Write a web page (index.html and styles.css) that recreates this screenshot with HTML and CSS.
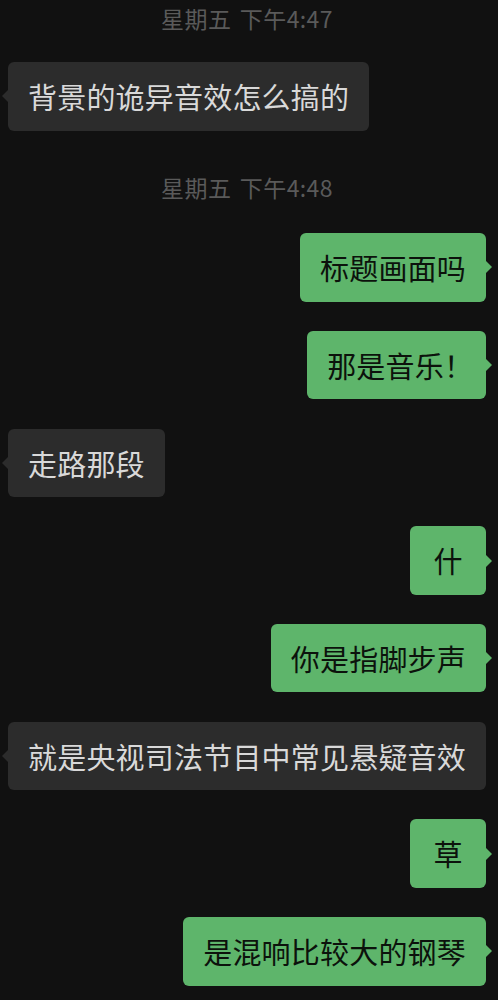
FILE: index.html
```html
<!DOCTYPE html>
<html lang="zh-CN">
<head>
    <meta charset="UTF-8">
    <meta name="viewport" content="width=device-width, initial-scale=1.0">
    <title>聊天</title>
    <link rel="stylesheet" href="styles.css">
</head>
<body>

    <div class="chat">
        <div class="time">星期五 下午4:47</div>
        <div class="msg in"><div class="bubble">背景的诡异音效怎么搞的</div></div>

        <div class="time">星期五 下午4:48</div>
        <div class="msg out"><div class="bubble">标题画面吗</div></div>
        <div class="msg out"><div class="bubble">那是音乐<span class="bang">！</span></div></div>
        <div class="msg in"><div class="bubble">走路那段</div></div>
        <div class="msg out"><div class="bubble">什</div></div>
        <div class="msg out"><div class="bubble">你是指脚步声</div></div>
        <div class="msg in"><div class="bubble">就是央视司法节目中常见悬疑音效</div></div>
        <div class="msg out"><div class="bubble">草</div></div>
        <div class="msg out"><div class="bubble">是混响比较大的钢琴</div></div>
    </div>

</body>
</html>
```

FILE: styles.css
```css
body {
    margin: 0;
    background-color: #111111;
    font-family: "Noto Sans CJK SC", "Noto Sans", sans-serif;
}
.chat {
    display: flex;
    flex-direction: column;
    padding: 0 12px 0 8px;
}
.time {
    height: 30px;
    line-height: 30px;
    margin: 12.5px 0 31px;
    text-align: center;
    font-size: 23px;
    letter-spacing: 0.4px;
    word-spacing: 3px;
    color: #5a5a5a;
}
.time:first-child {
    margin-top: 3px;
    margin-bottom: 29px;
}
.msg {
    display: flex;
    margin-bottom: 29.2px;
}
.msg.out {
    justify-content: flex-end;
}
.bubble {
    position: relative;
    min-width: 76px;
    box-sizing: border-box;
    padding: 17px 20px;
    line-height: 34.5px;
    font-size: 29px;
    letter-spacing: 0.2px;
    white-space: nowrap;
    text-align: center;
    border-radius: 6px;
}
.in .bubble {
    background: #2c2c2c;
    color: #d9d9d9;
}
.out .bubble {
    background: #5eb56b;
    color: #0c120c;
}
/* bubble tail */
.bubble::before {
    content: "";
    position: absolute;
    top: 50%;
    margin-top: -7px;
    border: 7px solid transparent;
}
.in .bubble::before {
    left: -13px;
    border-right: 7px solid #2c2c2c;
}
.out .bubble::before {
    right: -13px;
    border-left: 7px solid #5eb56b;
}
.bang {
    letter-spacing: -7px;
}
```
